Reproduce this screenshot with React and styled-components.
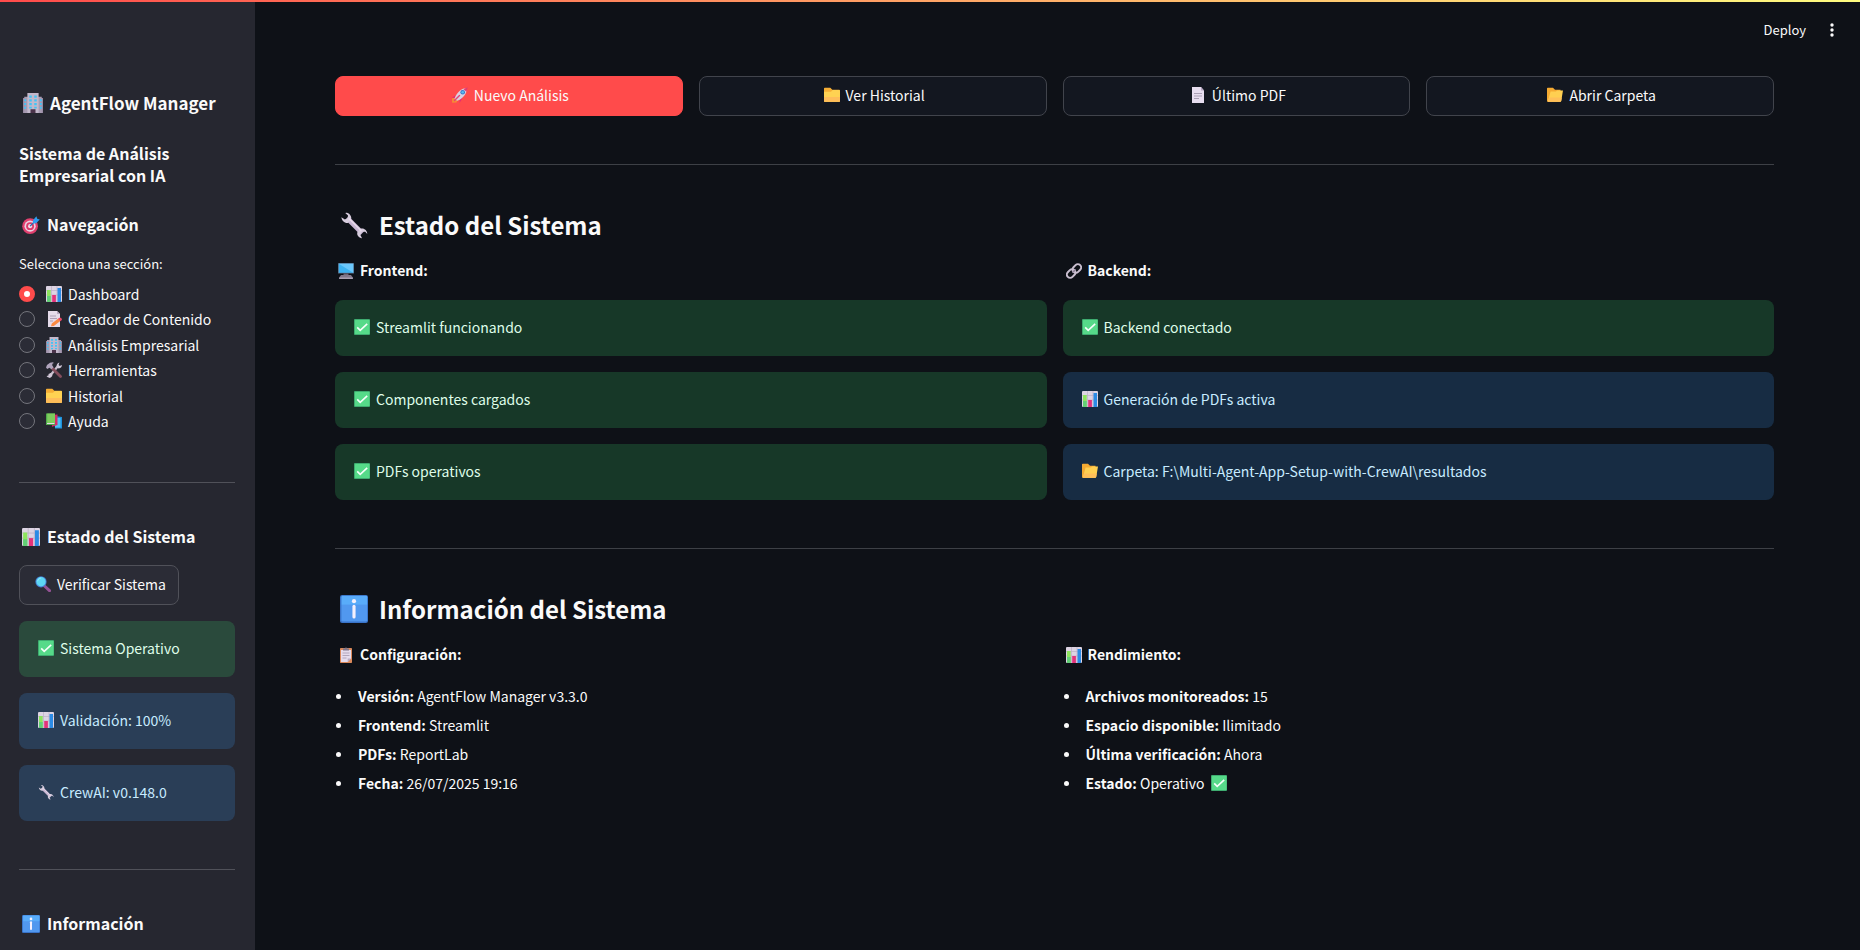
import React from "react";
import styled, { createGlobalStyle, css } from "styled-components";

const GlobalStyle = createGlobalStyle`
  *, *::before, *::after { box-sizing: border-box; }
  body {
    margin: 0;
    background: #0e1117;
    color: #fafafa;
    font-family: "Source Sans Pro", "Noto Sans CJK SC", "Noto Sans", sans-serif;
    font-size: 14px;
    line-height: 24px;
  }
  h1, h2, h3, p, ul, fieldset { margin: 0; padding: 0; border: 0; }
  button { font: inherit; color: inherit; cursor: pointer; }
`;

/* ---------- emoji drawings, on a 16 x 16 grid ---------- */

const drawings = {
  building: (
    <>
      <path d="M0 4h4v12H0zM12 4h4v12h-4z" fill="#988ba3" />
      <path d="M1 3h3v13H1zM12 3h3v13h-3z" fill="#a79bb2" />
      <path d="M3.500 0h9v16h-9z" fill="#c3b8cb" />
      <path d="M5 2h2v1.700H5zM9 2h2v1.700H9zM5 5h2v1.700H5zM9 5h2v1.700H9zM5 8h2v1.700H5zM9 8h2v1.700H9zM5 11h2v1.300H5zM9 11h2v1.300H9zM1 5h1.500v1.600H1zM1 8h1.500v1.600H1zM1 11h1.500v1.600H1zM13.500 5H15v1.600h-1.500zM13.500 8H15v1.600h-1.500zM13.500 11H15v1.600h-1.500z" fill="#43c4f5" />
      <path d="M6 13h4v3H6z" fill="#4b344b" />
    </>
  ),
  target: (
    <>
      <circle cx="7.200" cy="9" r="7" fill="#e13f6e" />
      <circle cx="7.200" cy="9" r="5" fill="#e8d3e2" />
      <circle cx="7.200" cy="9" r="3.500" fill="#dc3a6b" />
      <circle cx="7.200" cy="9" r="1.800" fill="#efdfea" />
      <path d="M7.200 9 12 4.200" stroke="#276bb0" strokeWidth="1.200" />
      <path d="M9.800 3.700 12.800.3l.7 2.200 2.300.7-3.200 3.200-2.800.2z" fill="#2d9cf0" />
    </>
  ),
  chart: (
    <>
      <rect width="16" height="16" rx="1" fill="#ddd4e3" />
      <path d="M0 4.500h16M0 9h16M5.500 0v16M11 0v16" stroke="#bdb0c5" strokeWidth=".7" />
      <path d="M1 4h3.700v12H1z" fill="#8ee45e" />
      <path d="M1 10h3.700v6H1z" fill="#62cf76" />
      <path d="M6.200 9h3.700v7H6.200z" fill="#e4327a" />
      <path d="M11.500 2H15v14h-3.500z" fill="#2c8be5" />
    </>
  ),
  memo: (
    <>
      <path d="M2 0h9l3 3v13H2z" fill="#e5dbea" />
      <path d="M11 0v3h3z" fill="#b8a9c1" />
      <path d="M4 5h6M4 7.500h7M4 10h3" stroke="#ada0b6" strokeWidth="1" />
      <path d="m5.800 12.500 6.500-5 2 2.500-6.500 5-2.800.2z" fill="#fb8a42" />
      <path d="m12 7.700 1.500-1 1.500 0 1 1.500-.4 1-1.400 1z" fill="#ec4968" />
    </>
  ),
  tools: (
    <>
      <path d="m3 15 9-11" stroke="#c9becd" strokeWidth="2.200" />
      <path d="M11 5.500c-1-2 .2-4.500 2.400-5L12.600 3l1.200 1 2-1c.5 2-1.600 4-3.800 3.300zM4.800 11l1.500 1.500c.5 1.500-1 3.500-3 3.200-2 0-2.700-1.600-2.700-1.600l2-.5-.1-1.500z" fill="#d2c8d8" />
      <path d="m6 6 8.500 8.500" stroke="#844e5d" strokeWidth="2.800" strokeLinecap="round" />
      <path d="M0 5.500 1 3l3-2.300 3-.4.8.8-1.400.7-.2 1.500 1.300 2-2 2-2-1.500L1.200 7z" fill="#b0a4bc" />
    </>
  ),
  folder: (
    <>
      <path d="M0 1.500q0-.8.8-.8h5.500l2 2h6.900q.8 0 .8.8V14q0 .8-.8.8H.8Q0 14.800 0 14z" fill="#f6ae35" />
      <path d="M0 4.700h7l1.700-1.700H15q1 0 1 1v10q0 .8-.8.8H.8Q0 14.800 0 14z" fill="#ffd252" />
      <path d="M0 10h16v4q0 .8-.8.8H.8Q0 14.800 0 14z" fill="#ffbd5a" />
    </>
  ),
  openFolder: (
    <>
      <path d="M0 1.500q0-.8.8-.8H6l2 2h5.500v12H.8Q0 14.700 0 14z" fill="#f5aa32" />
      <path d="M3.600 4.500H9l1-1h6L14.200 14q-.2.800-1 .800H.7z" fill="#ffcf51" />
      <path d="m2.200 10.500 12.600 0-.6 3.500q-.2.800-1 .800H.7z" fill="#ffbf59" />
    </>
  ),
  books: (
    <>
      <path d="m9 3 7 1v11.500H9z" fill="#1d91dd" />
      <path d="M8 5h6.500v9.500H9z" fill="#51c2f6" />
      <path d="m5 2 6.500-.5V12L6 13.800z" fill="#d52c68" />
      <path d="M0 .5h9V12H0z" fill="#4fab4b" />
      <path d="M1.200.5H9V10H1.200z" fill="#7dcc5d" />
      <path d="M1 10.500h7.500" stroke="#e4d9e9" strokeWidth="1" />
    </>
  ),
  magnifier: (
    <>
      <path d="m9.500 10 5 4.700" stroke="#945294" strokeWidth="3" strokeLinecap="round" />
      <circle cx="6" cy="5.800" r="5.600" fill="#477bd0" />
      <circle cx="6" cy="5.800" r="4.700" fill="#5dd6f3" />
      <path d="M2.500 5.300A4 4 0 0 1 6 2" stroke="#8ce6fa" strokeWidth="1" fill="none" />
    </>
  ),
  check: (
    <>
      <rect width="16" height="16" rx="1" fill="#3eac70" />
      <rect x="1" y="1" width="14.500" height="14" rx=".5" fill="#56da89" />
      <path d="m3.200 8.400 3 3 7-6.500" fill="none" stroke="#f6fffb" strokeWidth="1.600" />
    </>
  ),
  wrench: (
    <>
      <path d="m4 4 8.700 8.700" stroke="#c9b7d4" strokeWidth="2.700" />
      <path d="M4 1C5.800 1.500 7 3.500 6.200 5.200L4.500 6.800C2.500 7 1 5.400.8 3.500l2 1.300 1.500-.7.300-1.500L3 1.200q.4-.4 1-.2zM10 12c-.7 1.600.8 3.500 2.600 3.500l-1-2 .8-1.600 2-.1 1.200 1.400c0-2.300-2-3.700-3.800-3.100z" fill="#d7cdde" />
      <path d="m5 4.200 7.200 7.200" stroke="#eadced" strokeWidth=".8" />
    </>
  ),
  info: (
    <>
      <rect width="16" height="16" rx="1.200" fill="#3973c8" />
      <rect x=".8" y=".5" width="14.700" height="14.700" rx=".8" fill="#5198ef" />
      <path d="M1 .5h14.500v5H1z" fill="#59acfa" />
      <circle cx="8" cy="3.500" r="1.200" fill="#f5f0fc" />
      <path d="M8 6.500v6" stroke="#f5f0fc" strokeWidth="1.800" strokeLinecap="round" />
    </>
  ),
  rocket: (
    <>
      <path d="M3 8.500 0 10.700l3.300.8zM7.700 12.700l-.2 3.300 2.200-3.500 1-3.500z" fill="#e32e72" />
      <path d="M.2 15.800 0 11.500l2.500-.8 2.800 2.800-.8 2z" fill="#f68b35" />
      <path d="M2.500 11.700C4.400 6 8.700 1.200 14.600.9c.6 5.900-3.800 10.500-9.500 12.900z" fill="#d9d0e0" />
      <path d="m11.300 1.900 4.500-1.700-1.400 4.500z" fill="#e23c70" />
      <circle cx="10.700" cy="5.200" r="2.300" fill="#3b75cb" />
      <circle cx="10.700" cy="5.200" r="1.300" fill="#58bfec" />
      <path d="m7.500 8.500-5 5" stroke="#e34475" strokeWidth="1.400" strokeLinecap="round" />
    </>
  ),
  page: (
    <>
      <path d="M2 0h9l3 3.500V16H2z" fill="#e8def0" />
      <path d="M11 0v3.500h3z" fill="#b9a9c4" />
      <path d="M4 6.500h8M4 9h8M4 11.500h5" stroke="#aaa0b5" strokeWidth="1" />
    </>
  ),
  desktop: (
    <>
      <rect y="0" width="16" height="10.500" rx=".5" fill="#576b83" />
      <path d="M.8.8h14.400v9H.8z" fill="#3eb3f1" />
      <path d="M.8.8h14.400v9z" fill="#6bc8fb" />
      <path d="M5.500 10.500h5v2h-5z" fill="#6d6373" />
      <path d="m3 12 10 0 1.800 2.500v1.500H1.200v-1.500z" fill="#80778a" />
      <path d="M1.200 14.500h13.600V16H1.200z" fill="#aaa1b1" />
    </>
  ),
  link: (
    <g fill="none" stroke="#cabfd0" strokeWidth="2">
      <rect x="6" y="2" width="9.500" height="6.600" rx="3.300" transform="rotate(-45 11 5.300)" />
      <rect x=".5" y="7.400" width="9.500" height="6.600" rx="3.300" transform="rotate(-45 5 10.700)" />
      <path d="m6.300 9.700 3.400-3.400" stroke="#8f8099" strokeWidth="1.200" />
    </g>
  ),
  clipboard: (
    <>
      <rect x="2" y="1" width="12" height="15" rx=".7" fill="#db895b" />
      <path d="M3 3h10v8.500L9.700 15H3z" fill="#e5dced" />
      <path d="M13 11.500 9.700 15v-3.500z" fill="#b9acc4" />
      <path d="M5 1.500h1.600Q8-.5 9.400 1.500H11v2H5z" fill="#817689" />
      <path d="M4.500 6h7M4.500 8.500h7M4.500 11h4" stroke="#b2a6bb" strokeWidth="1" />
    </>
  ),
};

const emojiSizes = {
  small: css`width: 16px; height: 16px; margin: 0 6px 0 3px;`,
  medium: css`width: 18px; height: 18px; margin: 2px 7px 0 3px;`,
  large: css`width: 20px; height: 20px; margin: 0 7px 0 4px;`,
  huge: css`width: 28px; height: 28px; margin: 0 11px 0 5px;`,
};

const EmojiSvg = styled.svg`
  flex: none;
  display: block;
  ${(p) => emojiSizes[p.$size]}
`;

const Emoji = ({ name, size = "small" }) => (
  <EmojiSvg viewBox="0 0 16 16" $size={size} aria-hidden="true">
    {drawings[name]}
  </EmojiSvg>
);

/* ---------- shell ---------- */

const Decoration = styled.div`
  position: fixed;
  z-index: 2;
  inset: 0 0 auto 0;
  height: 2px;
  background: linear-gradient(90deg, #ff4b4b, #fffd80);
`;

const Shell = styled.div`
  display: flex;
  height: 100vh;
`;

const Sidebar = styled.aside`
  flex: 0 0 255px;
  padding: 91px 20px 0 19px;
  background: #262730;
  overflow: hidden;
`;

const Main = styled.main`
  flex: 1;
  min-width: 0;
  overflow: hidden;
`;

const Toolbar = styled.header`
  display: flex;
  justify-content: flex-end;
  align-items: center;
  gap: 10px;
  height: 60px;
  padding-right: 20px;
`;

const ToolbarButton = styled.button`
  display: flex;
  align-items: center;
  justify-content: center;
  height: 28px;
  min-width: 16px;
  padding: 0 ${(p) => (p.$text ? 8 : 0)}px;
  border: 0;
  background: none;
  font-size: 13px;
`;

const Content = styled.div`
  padding: 16px 86px 80px 80px;
`;

const Divider = styled.hr`
  height: 1px;
  margin: 48px 0 42px;
  border: 0;
  background: ${(p) => (p.$sidebar ? "#505159" : "#3d4046")};
`;

/* ---------- headings ---------- */

const SidebarTitle = styled.h1`
  display: flex;
  align-items: center;
  margin-bottom: 27px;
  font-size: 17px;
  font-weight: 700;
  line-height: 24px;
  white-space: nowrap;
`;

const SidebarTagline = styled.p`
  margin-bottom: 27px;
  font-size: 16px;
  font-weight: 700;
  line-height: 22px;
`;

const SidebarHeading = styled.h3`
  display: flex;
  align-items: center;
  margin-bottom: 16px;
  padding-bottom: 2px;
  font-size: 16px;
  font-weight: 700;
  line-height: 22px;
`;

const SectionHeading = styled.h2`
  display: flex;
  align-items: center;
  margin-bottom: 16px;
  font-size: 24px;
  font-weight: 700;
  line-height: 36px;
`;

const ColumnLabel = styled.p`
  display: flex;
  align-items: center;
  padding-bottom: 2px;
  font-weight: 700;
  line-height: 23px;
`;

/* ---------- controls ---------- */

const Button = styled.button`
  display: flex;
  align-items: center;
  justify-content: center;
  height: 40px;
  padding: 0 12px 2px;
  border: 1px solid ${(p) => (p.$primary ? "#ff4b4b" : p.$sidebar ? "#505159" : "#41444c")};
  border-radius: 8px;
  background: ${(p) => (p.$primary ? "#ff4b4b" : p.$sidebar ? "#2b2c36" : "#131720")};
`;

const Actions = styled.nav`
  display: grid;
  grid-template-columns: repeat(4, 1fr);
  gap: 16px;
`;

const RadioGroup = styled.fieldset`
  min-width: 0;
`;

const RadioLegend = styled.legend`
  padding: 1px 0 0;
  margin-bottom: 7px;
  font-size: 13px;
  line-height: 20px;
`;

const RadioRows = styled.div`
  display: grid;
  grid-auto-rows: 1fr;
  height: 153px;
`;

const RadioRow = styled.label`
  display: flex;
  align-items: center;
  line-height: 24px;
  white-space: nowrap;
`;

const Radio = styled.input`
  appearance: none;
  flex: none;
  width: 16px;
  height: 16px;
  margin: 0 8px 0 0;
  border: 1px solid #74757c;
  border-radius: 50%;
  background: #2b2c36;
  &:checked {
    border: 5px solid #ff4b4b;
    background: #ffffff;
  }
`;

/* ---------- status ---------- */

const alertColors = {
  success: css`background: rgba(61, 213, 109, 0.2); color: #dffde9;`,
  info: css`background: rgba(61, 157, 243, 0.2); color: #c7ebff;`,
};

const AlertBox = styled.div`
  display: flex;
  align-items: center;
  min-height: 56px;
  padding: 15px 16px 17px;
  border-radius: 8px;
  ${(p) => alertColors[p.$kind]}
`;

const Alert = ({ kind, icon, children }) => (
  <AlertBox $kind={kind} role="status">
    <Emoji name={icon} />
    {children}
  </AlertBox>
);

const Stack = styled.div`
  display: flex;
  flex-direction: column;
  align-items: stretch;
  gap: 16px;
`;

const SidebarAction = styled.div`
  display: flex;
`;

const Columns = styled.div`
  display: grid;
  grid-template-columns: 1fr 1fr;
  gap: 16px;
`;

const Facts = styled.ul`
  margin-top: 14px;
  line-height: 29px;
  list-style: none;
`;

const Fact = styled.li`
  display: flex;
  align-items: center;
  &::before {
    content: "";
    flex: none;
    width: 5px;
    height: 5px;
    margin: 0 17px 0 1px;
    border-radius: 50%;
    background: currentColor;
  }
  svg {
    display: inline-block;
    vertical-align: -2px;
    margin-right: 0;
  }
`;

const sections = [
  ["chart", "Dashboard"],
  ["memo", "Creador de Contenido"],
  ["building", "Análisis Empresarial"],
  ["tools", "Herramientas"],
  ["folder", "Historial"],
  ["books", "Ayuda"],
];

const actions = [
  ["rocket", "Nuevo Análisis"],
  ["folder", "Ver Historial"],
  ["page", "Último PDF"],
  ["openFolder", "Abrir Carpeta"],
];

const status = [
  {
    icon: "desktop",
    title: "Frontend:",
    alerts: [
      ["success", "check", "Streamlit funcionando"],
      ["success", "check", "Componentes cargados"],
      ["success", "check", "PDFs operativos"],
    ],
  },
  {
    icon: "link",
    title: "Backend:",
    alerts: [
      ["success", "check", "Backend conectado"],
      ["info", "chart", "Generación de PDFs activa"],
      ["info", "openFolder", "Carpeta: F:\\Multi-Agent-App-Setup-with-CrewAI\\resultados"],
    ],
  },
];

const information = [
  {
    icon: "clipboard",
    title: "Configuración:",
    facts: [
      ["Versión:", "AgentFlow Manager v3.3.0"],
      ["Frontend:", "Streamlit"],
      ["PDFs:", "ReportLab"],
      ["Fecha:", "26/07/2025 19:16"],
    ],
  },
  {
    icon: "chart",
    title: "Rendimiento:",
    facts: [
      ["Archivos monitoreados:", "15"],
      ["Espacio disponible:", "Ilimitado"],
      ["Última verificación:", "Ahora"],
      ["Estado:", "Operativo", "check"],
    ],
  },
];

export default function App() {
  return (
    <>
      <GlobalStyle />
      <Decoration />
      <Shell>
        <Sidebar>
          <SidebarTitle><Emoji name="building" size="large" />AgentFlow Manager</SidebarTitle>
          <SidebarTagline>Sistema de Análisis Empresarial con IA</SidebarTagline>
          <SidebarHeading><Emoji name="target" size="medium" />Navegación</SidebarHeading>
          <RadioGroup>
            <RadioLegend>Selecciona una sección:</RadioLegend>
            <RadioRows>
              {sections.map(([icon, label], i) => (
                <RadioRow key={label}>
                  <Radio type="radio" name="section" defaultChecked={i === 0} />
                  <Emoji name={icon} />
                  {label}
                </RadioRow>
              ))}
            </RadioRows>
          </RadioGroup>
          <Divider $sidebar />
          <SidebarHeading><Emoji name="chart" size="medium" />Estado del Sistema</SidebarHeading>
          <Stack>
            <SidebarAction>
              <Button $sidebar type="button"><Emoji name="magnifier" />Verificar Sistema</Button>
            </SidebarAction>
            <Alert kind="success" icon="check">Sistema Operativo</Alert>
            <Alert kind="info" icon="chart">Validación: 100%</Alert>
            <Alert kind="info" icon="wrench">CrewAI: v0.148.0</Alert>
          </Stack>
          <Divider $sidebar />
          <SidebarHeading><Emoji name="info" size="medium" />Información</SidebarHeading>
        </Sidebar>

        <Main>
          <Toolbar>
            <ToolbarButton type="button" $text>Deploy</ToolbarButton>
            <ToolbarButton type="button" aria-label="Menú principal">
              <svg width="16" height="16" viewBox="0 0 16 16" fill="#fafafa" aria-hidden="true">
                <circle cx="8" cy="3" r="1.700" />
                <circle cx="8" cy="8" r="1.700" />
                <circle cx="8" cy="13" r="1.700" />
              </svg>
            </ToolbarButton>
          </Toolbar>
          <Content>
            <Actions>
              {actions.map(([icon, label], i) => (
                <Button key={label} type="button" $primary={i === 0}>
                  <Emoji name={icon} />
                  {label}
                </Button>
              ))}
            </Actions>
            <Divider />
            <SectionHeading><Emoji name="wrench" size="huge" />Estado del Sistema</SectionHeading>
            <Columns>
              {status.map((column) => (
                <Stack key={column.title}>
                  <ColumnLabel><Emoji name={column.icon} />{column.title}</ColumnLabel>
                  {column.alerts.map(([kind, icon, text]) => (
                    <Alert key={text} kind={kind} icon={icon}>{text}</Alert>
                  ))}
                </Stack>
              ))}
            </Columns>
            <Divider />
            <SectionHeading><Emoji name="info" size="huge" />Información del Sistema</SectionHeading>
            <Columns>
              {information.map((column) => (
                <section key={column.title}>
                  <ColumnLabel><Emoji name={column.icon} />{column.title}</ColumnLabel>
                  <Facts>
                    {column.facts.map(([name, value, icon]) => (
                      <Fact key={name}>
                        <span>
                          <strong>{name}</strong> {value} {icon && <Emoji name={icon} />}
                        </span>
                      </Fact>
                    ))}
                  </Facts>
                </section>
              ))}
            </Columns>
          </Content>
        </Main>
      </Shell>
    </>
  );
}
